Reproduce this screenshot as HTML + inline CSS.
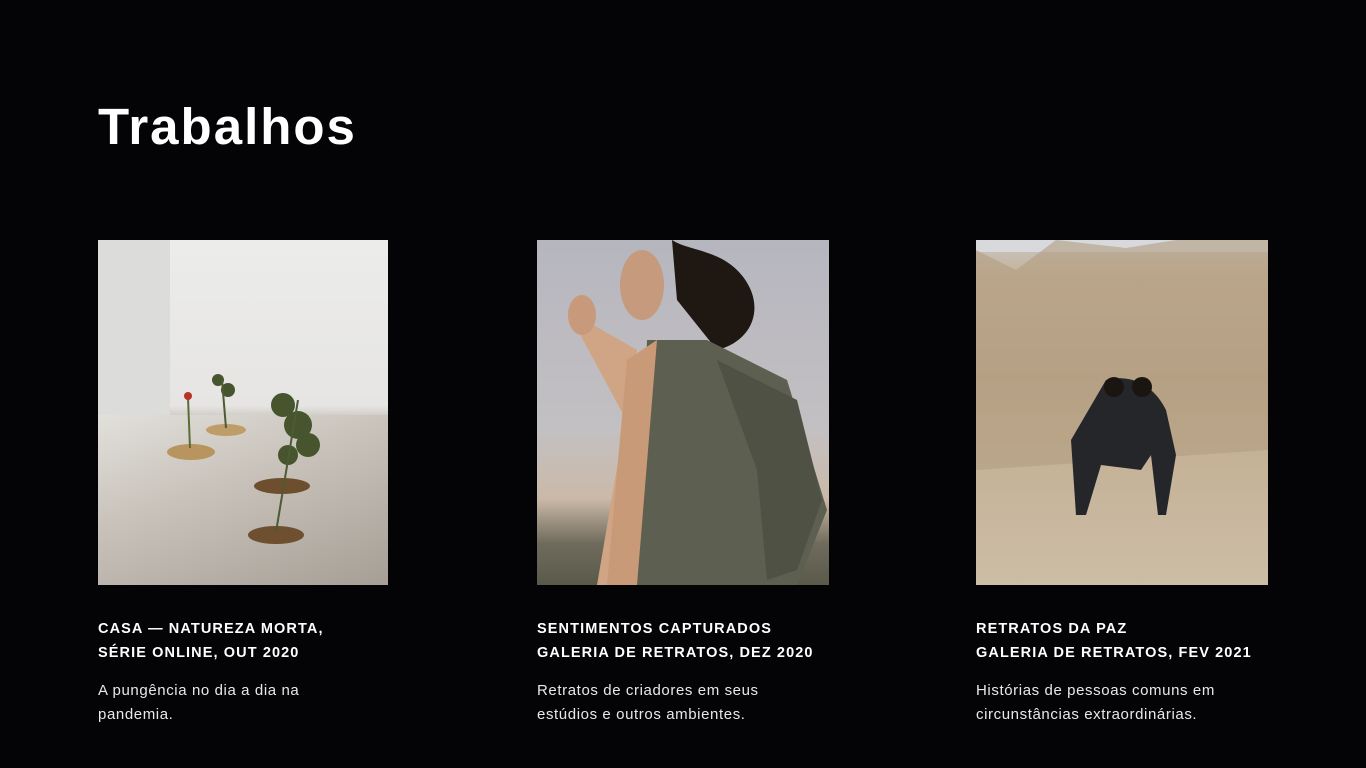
<!DOCTYPE html>
<html><head><meta charset="utf-8"><style>
html,body{margin:0;padding:0;background:#040406;width:1366px;height:768px;overflow:hidden;font-family:"Liberation Sans",sans-serif;color:#fff}
h1{position:absolute;left:98px;top:97px;margin:0;font-size:51px;font-weight:bold;letter-spacing:2px}
.img{position:absolute;top:240px;height:345px;overflow:hidden}
.cap{position:absolute;top:617px;font-size:14.5px;font-weight:bold;line-height:24px;letter-spacing:1.1px}
.desc{position:absolute;top:679px;font-size:15px;line-height:24px;color:#e8e8e8;letter-spacing:0.6px}
</style></head><body>
<h1>Trabalhos</h1>

<div class="img" style="left:98px;width:290px;background:linear-gradient(180deg,#ececeb 0%,#e6e5e3 48%,#c9c4bd 52%,#aaa29a 100%)">
 <div style="position:absolute;left:0;top:0;width:72px;height:175px;background:#dcdcdb"></div>
 <div style="position:absolute;left:0;top:175px;width:290px;height:170px;background:linear-gradient(160deg,#e2e0dc 0%,#c9c3bb 40%,#a79f96 100%)"></div>
 <svg width="290" height="345" style="position:absolute;left:0;top:0">
  <ellipse cx="93" cy="212" rx="24" ry="8" fill="#b8955e"/>
  <ellipse cx="128" cy="190" rx="20" ry="6" fill="#bf9d68"/>
  <ellipse cx="184" cy="246" rx="28" ry="8" fill="#6d4f2e"/>
  <ellipse cx="178" cy="295" rx="28" ry="9" fill="#6e4f2f"/>
  <line x1="92" y1="208" x2="90" y2="158" stroke="#5a6b3a" stroke-width="2"/>
  <circle cx="90" cy="156" r="4" fill="#b8322a"/>
  <g fill="#46552d"><circle cx="120" cy="140" r="6"/><circle cx="130" cy="150" r="7"/><circle cx="185" cy="165" r="12"/><circle cx="200" cy="185" r="14"/><circle cx="210" cy="205" r="12"/><circle cx="190" cy="215" r="10"/></g>
  <line x1="128" y1="188" x2="124" y2="140" stroke="#4d5a33" stroke-width="2"/>
  <line x1="178" y1="292" x2="200" y2="160" stroke="#4d5a33" stroke-width="2"/>
 </svg>
</div>

<div class="img" style="left:537px;width:292px;background:linear-gradient(180deg,#b6b6bf 0%,#c3c0c2 55%,#cbb9a8 75%,#6f6b5c 88%,#5a5a4a 100%)">
 <svg width="292" height="345" style="position:absolute;left:0;top:0">
  <path d="M135 0 C150 10 180 10 200 30 C230 60 220 100 180 110 L140 60 Z" fill="#1e1712"/>
  <ellipse cx="105" cy="45" rx="22" ry="35" fill="#c69a7d"/>
  <path d="M30 70 L100 110 L60 345 L70 345 L90 300 L100 200 Z" fill="#d0a585"/>
  <path d="M40 90 L110 100 L100 345 L260 345 L290 270 L250 140 L170 100 L110 100 Z" fill="#5d5f50"/>
  <path d="M90 120 L120 100 L100 345 L70 345 Z" fill="#c99a78"/>
  <path d="M180 120 L260 160 L285 260 L260 330 L230 340 L220 230 Z" fill="#4f5144"/>
  <ellipse cx="45" cy="75" rx="14" ry="20" fill="#c8997a"/>
 </svg>
</div>

<div class="img" style="left:976px;width:292px;background:linear-gradient(180deg,#c9c6c2 0%,#c4b29a 10%,#bba68b 40%,#c4b196 60%,#cdbda6 100%)">
 <svg width="292" height="345" style="position:absolute;left:0;top:0">
  <rect width="292" height="12" fill="#d8d9dc"/>
  <path d="M0 10 L40 30 L80 0 L150 8 L200 0 L292 0 L292 210 L0 230 Z" fill="#b39c80" opacity="0.6"/>
  <path d="M130 140 C150 135 175 140 190 170 L200 215 L190 275 L182 275 L175 215 L165 230 L125 225 L110 275 L100 275 L95 200 Z" fill="#25262a"/>
  <circle cx="138" cy="147" r="10" fill="#1a1510"/>
  <circle cx="166" cy="147" r="10" fill="#1a1510"/>
 </svg>
</div>

<div class="cap" style="left:98px">CASA — NATUREZA MORTA,<br>SÉRIE ONLINE, OUT 2020</div>
<div class="cap" style="left:537px">SENTIMENTOS CAPTURADOS<br>GALERIA DE RETRATOS, DEZ 2020</div>
<div class="cap" style="left:976px">RETRATOS DA PAZ<br>GALERIA DE RETRATOS, FEV 2021</div>

<div class="desc" style="left:98px">A pungência no dia a dia na<br>pandemia.</div>
<div class="desc" style="left:537px">Retratos de criadores em seus<br>estúdios e outros ambientes.</div>
<div class="desc" style="left:976px">Histórias de pessoas comuns em<br>circunstâncias extraordinárias.</div>
</body></html>
